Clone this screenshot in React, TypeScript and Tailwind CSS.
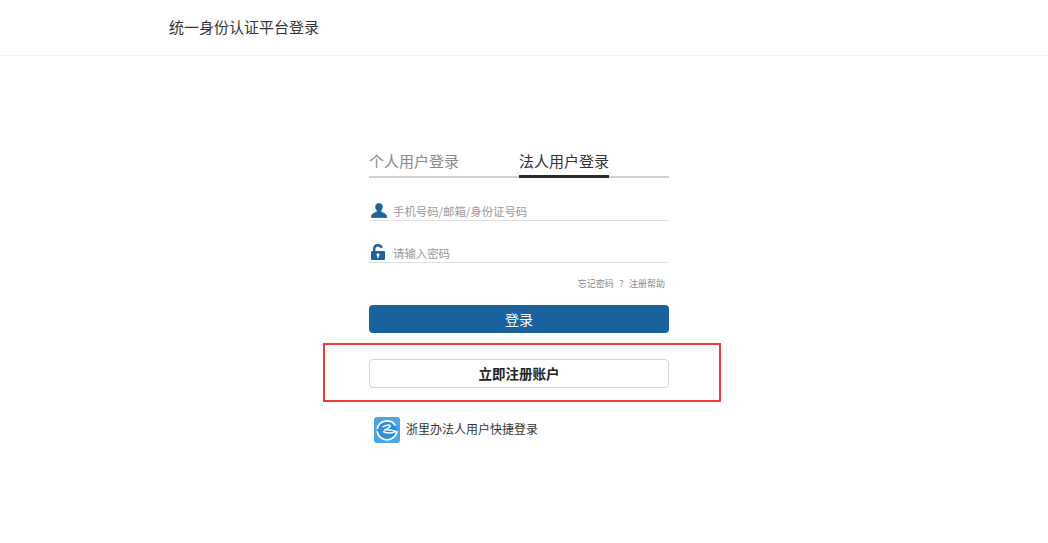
import React from "react";

const font = { fontFamily: '"Noto Sans CJK SC", "Liberation Sans", sans-serif' };

function UserIcon() {
  return (
    <svg width="16" height="15" viewBox="0 0 16 15" className="shrink-0">
      <path d="M8 .4C5.800.4 4.600 1.700 4.600 3.600c0 1.700.7 3.200 1.500 4.100.2.400.1 1-.4 1.300C3.800 10 1 10.600.6 12.500L.3 14.700h15.400l-.3-2.200c-.4-1.900-3.200-2.500-5.100-3.500-.5-.3-.6-.9-.4-1.300.8-.9 1.500-2.400 1.500-4.100C11.400 1.700 10.200.4 8 .4z" fill="#1b639f" stroke="#1b639f" strokeWidth="0.700" />
    </svg>
  );
}

function LockIcon() {
  return (
    <svg width="14" height="16" viewBox="0 0 14 16" className="shrink-0">
      <path d="M3.200 7.500V4.800C3.200 2.600 4.800 1.300 6.900 1.300c1.800 0 3.200.9 3.800 2.600" fill="none" stroke="#1b639f" strokeWidth="2.400" />
      <path fillRule="evenodd" d="M1 7h12a1 1 0 0 1 1 1v7a1 1 0 0 1-1 1H1a1 1 0 0 1-1-1V8a1 1 0 0 1 1-1zm6 2.300a1.500 1.500 0 0 0-.7 2.800V14h1.400v-1.900A1.500 1.500 0 0 0 7 9.300z" fill="#1b639f" />
    </svg>
  );
}

function AppLogo() {
  return (
    <svg width="26" height="26" viewBox="0 0 26 26" className="shrink-0">
      <rect width="26" height="26" rx="3" fill="#4ba5e4" />
      <circle cx="13" cy="13" r="10" fill="#2f8fd6" />
      <path d="M21 8A10 10 0 0 0 3.300 11.500" fill="none" stroke="#fff" strokeWidth="1.800" strokeLinecap="round" />
      <path d="M3.300 15A10 10 0 0 0 22.800 15" fill="none" stroke="#fff" strokeWidth="1.800" strokeLinecap="round" />
      <path d="M9 9.800c2.500-1.800 6-2.200 7-1.200 1 1.200-3 3.200-5.500 4.400 3.500-.4 7.500.2 11.500 1.400-3.500 1.800-8.500 2-12.500.4" fill="none" stroke="#fff" strokeWidth="1.500" strokeLinecap="round" strokeLinejoin="round" />
    </svg>
  );
}

function Field({ icon, placeholder }: { icon: React.ReactNode; placeholder: string }) {
  return (
    <div className="flex h-[22px] items-end border-b border-[#e0e0e0] pb-[2px] pl-[2px]">
      <span className="flex w-[22px] shrink-0 items-end">{icon}</span>
      <span className="pb-[1px] text-[11.400px] leading-none text-[#999999]">{placeholder}</span>
    </div>
  );
}

export default function App() {
  return (
    <div className="relative h-[543px] w-[1048px] overflow-hidden bg-white" style={font}>
      <header className="flex h-[56px] items-center border-b border-[#f2f3f5] pb-[2px] pl-[169px]">
        <h1 className="text-[15px] font-normal leading-none text-[#333333]">统一身份认证平台登录</h1>
      </header>

      <main className="ml-[369px] w-[300px] pt-[97px]">
        <div className="flex h-[25px] gap-[60px] border-b-2 border-[#d0d0d0] text-[15px] leading-[15px]">
          <div className="h-[25px] text-[#8a8a8a]">个人用户登录</div>
          <div className="h-[25px] border-b-[3px] border-[#2b2b2b] text-[#333333]">法人用户登录</div>
        </div>

        <div className="mt-[21px]">
          <Field icon={<UserIcon />} placeholder="手机号码/邮箱/身份证号码" />
        </div>
        <div className="mt-[20px]">
          <Field icon={<LockIcon />} placeholder="请输入密码" />
        </div>

        <div className="mt-[15px] flex h-[11px] items-center justify-end gap-[5.500px] pr-[4px] text-[9px] leading-none text-[#888888]">
          <span>忘记密码</span>
          <span>?</span>
          <span>注册帮助</span>
        </div>

        <button className="mt-[16px] block h-[28px] w-full rounded-[4px] bg-[#1a639f] text-[14px] leading-none text-white">
          登录
        </button>

        <button className="mt-[26px] block h-[29px] w-full rounded-[4px] border border-[#d5d5d5] bg-white text-[13.500px] font-bold leading-none text-[#222222]">
          立即注册账户
        </button>

        <div className="mt-[29px] flex items-center gap-[6px] pl-[5px]">
          <AppLogo />
          <span className="pb-[2px] text-[12px] leading-none text-[#333333]">浙里办法人用户快捷登录</span>
        </div>
      </main>

      <div className="pointer-events-none absolute left-[323px] top-[343px] h-[59px] w-[398px] border-2 border-[#ef3b3b]" />
    </div>
  );
}
